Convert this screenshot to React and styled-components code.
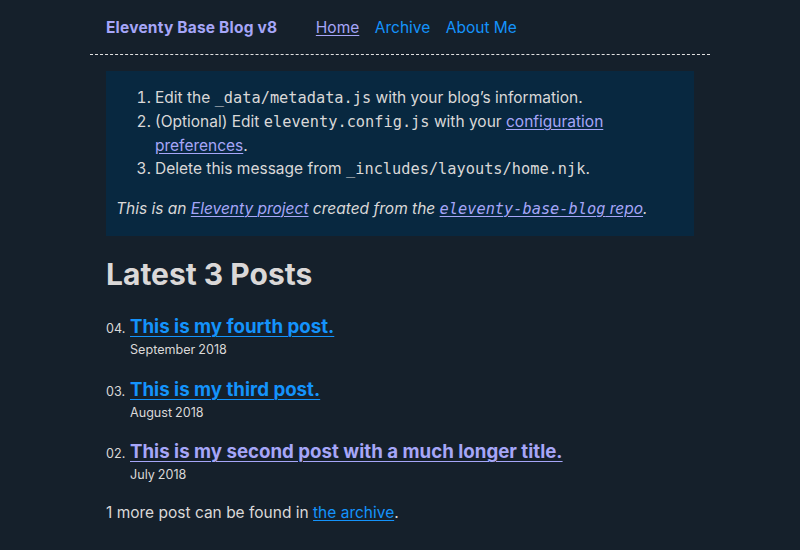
import React from 'react'
import styled, { createGlobalStyle } from 'styled-components'

const GlobalStyle = createGlobalStyle`
    html, body {
        margin: 0;
        padding: 0;
        background: #15202b;
    }
    body {
        font-family: Inter, "Noto Sans", sans-serif;
        font-size: 15.5px;
        line-height: 1.5;
        color: #dad8d8;
    }
`

const Page = styled.div`
    max-width: 620px;
    margin: 0 auto;
`

const Header = styled.header`
    display: flex;
    align-items: center;
    gap: 1em;
    padding: 15.5px 16px;
    border-bottom: 1px dashed #e0e0e0;
`

const HomeLink = styled.a`
    font-weight: 700;
    letter-spacing: 0.2px;
    color: #a6a6f8;
    text-decoration: none;
    margin-right: 23px;
`

const Nav = styled.ul`
    display: flex;
    gap: 1em;
    list-style: none;
    margin: 0;
    padding: 0;
`

const NavLink = styled.a`
    color: ${p => (p.$visited ? '#a6a6f8' : '#1493fb')};
    text-decoration: ${p => (p.$current ? 'underline' : 'none')};
    text-underline-offset: 2px;
`

const Main = styled.main`
    padding: 15.5px 16px;
`

const MessageBox = styled.div`
    background: #082840;
    padding: 15.5px 10px;
`

const Steps = styled.ol`
    margin: 0;
    padding-left: 39px;
`

const Code = styled.code`
    font-family: "DejaVu Sans Mono", "Liberation Mono", monospace;
    font-size: 15.3px;
`

const Link = styled.a`
    color: ${p => (p.$visited ? '#a6a6f8' : '#1493fb')};
    text-decoration: underline;
    text-decoration-thickness: 1px;
    text-underline-offset: 2px;
`

const Note = styled.p`
    margin: 1em 0 0;
    font-style: italic;
`

const Heading = styled.h1`
    font-size: 30px;
    line-height: 1.2;
    font-weight: 700;
    margin: 20px 0 21px;
`

const PostList = styled.ol`
    list-style: none;
    margin: 0;
    padding: 0 0 0 24px;
`

const PostItem = styled.li`
    display: flex;
    flex-wrap: wrap;
    align-items: baseline;
    margin-bottom: 15.5px;
`

const Index = styled.span`
    font-size: 12.6px;
    width: 24px;
    margin-left: -24px;
    text-align: left;
`

const PostLink = styled.a`
    font-size: 18.7px;
    font-weight: 700;
    flex-basis: calc(100% - 24px);
    color: ${p => (p.$visited ? '#a6a6f8' : '#1493fb')};
    text-decoration: underline;
    text-decoration-thickness: 1px;
    text-underline-offset: 3px;
    line-height: 1.5;
`

const PostDate = styled.time`
    font-size: 12.6px;
    word-spacing: -0.5px;
    line-height: 1.5;
`

const Footer = styled.p`
    margin: 0;
`

const posts = [
    { n: '04', title: 'This is my fourth post.', date: 'September 2018' },
    { n: '03', title: 'This is my third post.', date: 'August 2018' },
    { n: '02', title: 'This is my second post with a much longer title.', date: 'July 2018', visited: true },
]

const App = () => (
    <Page>
        <GlobalStyle />
        <Header>
            <HomeLink href="#">Eleventy Base Blog v8</HomeLink>
            <Nav>
                <li><NavLink href="#" $visited $current>Home</NavLink></li>
                <li><NavLink href="#">Archive</NavLink></li>
                <li><NavLink href="#">About Me</NavLink></li>
            </Nav>
        </Header>
        <Main>
            <MessageBox>
                <Steps>
                    <li>Edit the <Code>_data/metadata.js</Code> with your blog’s information.</li>
                    <li>
                        (Optional) Edit <Code>eleventy.config.js</Code> with your{' '}
                        <Link href="#" $visited>configuration preferences</Link>.
                    </li>
                    <li>Delete this message from <Code>_includes/layouts/home.njk</Code>.</li>
                </Steps>
                <Note>
                    This is an <Link href="#" $visited>Eleventy project</Link> created from the{' '}
                    <Link href="#" $visited><Code>eleventy-base-blog</Code> repo</Link>.
                </Note>
            </MessageBox>
            <Heading>Latest 3 Posts</Heading>
            <PostList>
                {posts.map(post => (
                    <PostItem key={post.n}>
                        <Index>{post.n}.</Index>
                        <PostLink href="#" $visited={post.visited}>{post.title}</PostLink>
                        <PostDate>{post.date}</PostDate>
                    </PostItem>
                ))}
            </PostList>
            <Footer>1 more post can be found in <Link href="#">the archive</Link>.</Footer>
        </Main>
    </Page>
)

export default App
